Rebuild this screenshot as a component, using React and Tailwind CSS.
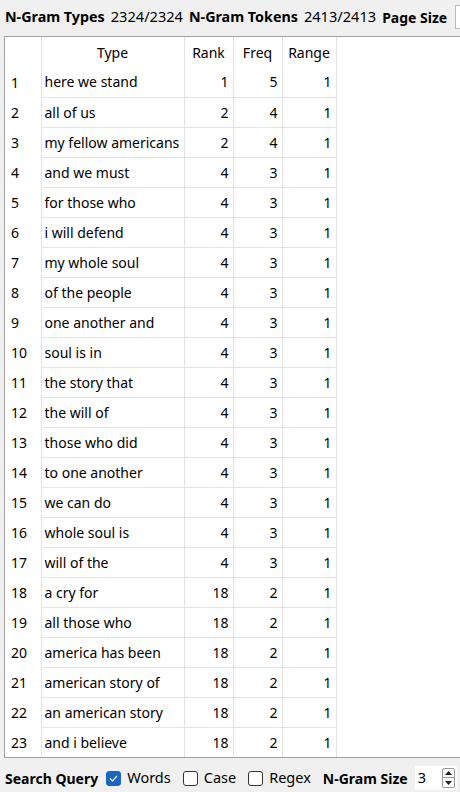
import React from 'react';

const rows = [
  ['here we stand', 1, 5, 1],
  ['all of us', 2, 4, 1],
  ['my fellow americans', 2, 4, 1],
  ['and we must', 4, 3, 1],
  ['for those who', 4, 3, 1],
  ['i will defend', 4, 3, 1],
  ['my whole soul', 4, 3, 1],
  ['of the people', 4, 3, 1],
  ['one another and', 4, 3, 1],
  ['soul is in', 4, 3, 1],
  ['the story that', 4, 3, 1],
  ['the will of', 4, 3, 1],
  ['those who did', 4, 3, 1],
  ['to one another', 4, 3, 1],
  ['we can do', 4, 3, 1],
  ['whole soul is', 4, 3, 1],
  ['will of the', 4, 3, 1],
  ['a cry for', 18, 2, 1],
  ['all those who', 18, 2, 1],
  ['america has been', 18, 2, 1],
  ['american story of', 18, 2, 1],
  ['an american story', 18, 2, 1],
  ['and i believe', 18, 2, 1],
];

const Check = ({ checked }) => (
  <span
    className={
      'inline-flex items-center justify-center w-[15px] h-[15px] rounded-[3px] border ' +
      (checked ? 'bg-[#1a66c7] border-[#1a66c7]' : 'bg-white border-[#333]')
    }
  >
    {checked && (
      <svg width="9" height="7" viewBox="0 0 9 7" fill="none">
        <path d="M1 3.5 L3.5 6 L8 1" stroke="white" strokeWidth="1.2" />
      </svg>
    )}
  </span>
);

export default function App() {
  return (
    <div className="w-[460px] h-[792px] bg-[#f0f0f0] flex flex-col overflow-hidden text-black font-['Noto_Sans',sans-serif] text-[14px]">
      <div className="h-[36px] flex items-center pl-[5px] pb-[2px] whitespace-nowrap shrink-0">
        <span className="font-bold text-[14.3px]">N-Gram Types</span>
        <span className="ml-[6px] text-[14.6px]">2324/2324</span>
        <span className="ml-[6px] font-bold text-[14.3px]">N-Gram Tokens</span>
        <span className="ml-[6px] text-[14.6px]">2413/2413</span>
        <span className="ml-[6px] font-bold text-[14px]">Page Size</span>
        <span className="ml-[8px] inline-block w-[40px] h-[24px] bg-white border border-[#bbb] shrink-0" />
      </div>

      <div className="ml-[4px] h-[722px] bg-white border-l border-t border-b border-[#a0a0a0] overflow-hidden">
        <table className="border-collapse table-fixed w-[331px]">
          <colgroup>
            <col className="w-[36px]" />
            <col className="w-[143px]" />
            <col className="w-[49px]" />
            <col className="w-[49px]" />
            <col className="w-[54px]" />
          </colgroup>
          <thead>
            <tr className="h-[30px]">
              <th className="border-r border-[#e3e3e3]" />
              <th className="font-normal text-center border-r border-[#e3e3e3]">Type</th>
              <th className="font-normal text-center border-r border-[#e3e3e3]">Rank</th>
              <th className="font-normal text-center border-r border-[#e3e3e3]">Freq</th>
              <th className="font-normal text-center border-r border-[#e3e3e3]">Range</th>
            </tr>
          </thead>
          <tbody>
            {rows.map((r, i) => (
              <tr key={i} className="h-[30px]">
                <td className="pl-[6px] border-r border-[#e3e3e3] whitespace-nowrap">{i + 1}</td>
                <td className="pl-[3px] border-r border-b border-[#e3e3e3] whitespace-nowrap overflow-hidden">{r[0]}</td>
                <td className="pr-[4px] text-right border-r border-b border-[#e3e3e3]">{r[1]}</td>
                <td className="pr-[4px] text-right border-r border-b border-[#e3e3e3]">{r[2]}</td>
                <td className="pr-[4px] text-right border-r border-b border-[#e3e3e3]">{r[3]}</td>
              </tr>
            ))}
          </tbody>
        </table>
      </div>

      <div className="flex-1 flex items-center pl-[5px] pt-[6px] whitespace-nowrap">
        <span className="font-bold">Search Query</span>
        <span className="ml-[8px] flex items-center gap-[6px]">
          <Check checked />
          <span className="text-[14.5px]">Words</span>
        </span>
        <span className="ml-[12px] flex items-center gap-[6px]">
          <Check />
          <span className="text-[14.5px]">Case</span>
        </span>
        <span className="ml-[12px] flex items-center gap-[6px]">
          <Check />
          <span className="text-[14.5px]">Regex</span>
        </span>
        <span className="ml-[12px] font-bold">N-Gram Size</span>
        <span className="ml-[7px] flex items-center bg-white w-[42px] h-[24px]">
          <span className="pl-[3px] flex-1 text-[14.5px]">3</span>
          <span className="flex flex-col mr-[2px] border border-[#999] rounded-[2px]">
            <span className="w-[11px] h-[9px] flex items-center justify-center border-b border-[#999]">
              <svg width="7" height="4" viewBox="0 0 7 4"><path d="M0 4 L3.5 0 L7 4 Z" fill="#222" /></svg>
            </span>
            <span className="w-[11px] h-[9px] flex items-center justify-center">
              <svg width="7" height="4" viewBox="0 0 7 4"><path d="M0 0 L3.5 4 L7 0 Z" fill="#222" /></svg>
            </span>
          </span>
        </span>
      </div>
    </div>
  );
}
